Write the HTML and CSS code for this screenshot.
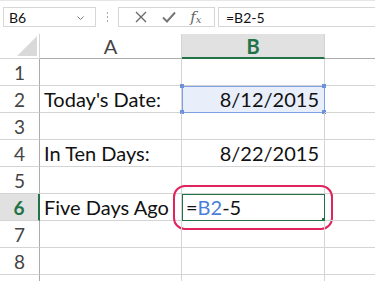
FILE: index.html
```html
<!DOCTYPE html>
<html lang="en">
<head>
    <meta charset="UTF-8">
    <meta name="viewport" content="width=device-width, initial-scale=1.0">
    <title>Date formula</title>
    <link rel="stylesheet" href="styles.css">
</head>
<body>
    <!-- formula bar -->
    <div class="formula-bar">
        <div class="name-box">
            <span>B6</span>
            <svg class="caret" width="7" height="4" viewBox="0 0 7 4"><path d="M0.5 0.5 L3.5 3.5 L6.5 0.5" fill="none" stroke="#777" stroke-width="1"/></svg>
        </div>
        <div class="grip">
            <span></span><span></span><span></span>
        </div>
        <div class="fx-buttons">
            <svg width="14" height="14" viewBox="0 0 14 14"><path d="M2 2 L12 12 M12 2 L2 12" stroke="#666" stroke-width="1.3" fill="none"/></svg>
            <svg width="16" height="14" viewBox="0 0 16 14"><path d="M2 7.5 L6 11.5 L14 2.5" stroke="#777" stroke-width="2" fill="none"/></svg>
            <span class="fx">f<sub>x</sub></span>
        </div>
        <div class="formula-input">=B2-5</div>
    </div>

    <!-- sheet -->
    <div class="sheet">
        <div class="corner"><span class="tri"></span></div>
        <div class="col-head">A</div>
        <div class="col-head active">B</div>
        <div class="col-head last"></div>

        <div class="row-head">1</div>
        <div class="cell"></div>
        <div class="cell"></div>
        <div class="cell last"></div>

        <div class="row-head">2</div>
        <div class="cell text">Today's Date:</div>
        <div class="cell num selected">8/12/2015
            <i class="h tl"></i><i class="h tr"></i><i class="h bl"></i><i class="h br"></i>
        </div>
        <div class="cell last"></div>

        <div class="row-head">3</div>
        <div class="cell"></div>
        <div class="cell"></div>
        <div class="cell last"></div>

        <div class="row-head">4</div>
        <div class="cell text">In Ten Days:</div>
        <div class="cell num">8/22/2015</div>
        <div class="cell last"></div>

        <div class="row-head">5</div>
        <div class="cell"></div>
        <div class="cell"></div>
        <div class="cell last"></div>

        <div class="row-head active">6</div>
        <div class="cell text">Five Days Ago</div>
        <div class="cell text editing">=<span class="ref">B2</span>-5
            <span class="fill-handle"></span>
            <span class="callout"></span>
        </div>
        <div class="cell last"></div>

        <div class="row-head">7</div>
        <div class="cell"></div>
        <div class="cell"></div>
        <div class="cell last"></div>

        <div class="row-head">8</div>
        <div class="cell"></div>
        <div class="cell"></div>
        <div class="cell last"></div>

        <div class="row-head"></div>
        <div class="cell"></div>
        <div class="cell"></div>
        <div class="cell last"></div>
    </div>
</body>
</html>
```

FILE: styles.css
```css
body {
    margin: 0;
    padding: 0;
    background: #ffffff;
    font-family: Lato, "Open Sans", sans-serif;
    color: #111;
    overflow: hidden;
}

/* formula bar */
.formula-bar {
    display: flex;
    align-items: center;
    height: 22px;
    padding: 5px 0 5px 3px;
    border-top: 1px solid #e6e6e6;
}

.name-box {
    width: 93px;
    height: 20px;
    border: 1px solid #d6d6d6;
    display: flex;
    align-items: center;
    justify-content: space-between;
    padding: 0 11px 0 5px;
    box-sizing: border-box;
    font-size: 14px;
}

.caret {
    margin-top: 1px;
}

.grip {
    width: 22px;
    display: flex;
    flex-direction: column;
    align-items: center;
    gap: 2px;
}

.grip span {
    width: 1px;
    height: 2px;
    background: #aaa;
}

.fx-buttons {
    width: 97px;
    height: 20px;
    border: 1px solid #d6d6d6;
    box-sizing: border-box;
    display: flex;
    align-items: center;
    justify-content: space-around;
    padding: 0 6px 0 8px;
}

.fx {
    font-family: "DejaVu Serif", "Liberation Serif", serif;
    font-style: italic;
    font-size: 15px;
    color: #666;
    line-height: 1;
}

.fx sub {
    font-size: 10px;
    vertical-align: -1px;
}

.formula-input {
    flex: 1;
    height: 20px;
    margin-left: 3px;
    border: 1px solid #d6d6d6;
    border-right: none;
    box-sizing: border-box;
    font-size: 14px;
    padding: 1px 0 0 7px;
    line-height: 17px;
}

/* grid */
.sheet {
    display: grid;
    grid-template-columns: 40px 142px 143px 1fr;
    grid-template-rows: 25px repeat(8, 27px) 7px;
    margin-top: 1px;
}

.corner {
    position: relative;
    border-right: 1px solid #d4d4d4;
    border-bottom: 1px solid #d4d4d4;
}

.tri {
    position: absolute;
    right: 2px;
    bottom: 2px;
    width: 0;
    height: 0;
    border-left: 20px solid transparent;
    border-bottom: 20px solid #d9d9d9;
}

.col-head {
    border-right: 1px solid #d4d4d4;
    border-bottom: 1px solid #ababab;
    display: flex;
    align-items: center;
    justify-content: center;
    font-size: 20px;
    color: #444;
}

.col-head.active {
    background: #e1e1e1;
    color: #217346;
    font-weight: bold;
    border-bottom: 2px solid #217346;
}

.col-head.last,
.cell.last {
    border-right: none;
}

.row-head {
    border-right: 1px solid #ababab;
    border-bottom: 1px solid #d4d4d4;
    display: flex;
    align-items: center;
    justify-content: center;
    font-size: 19px;
    color: #444;
}

.row-head.active {
    background: #e1e1e1;
    color: #217346;
    font-weight: bold;
    border-right: 2px solid #217346;
}

.cell {
    position: relative;
    border-right: 1px solid #d4d4d4;
    border-bottom: 1px solid #d4d4d4;
    font-size: 20px;
    line-height: 26px;
    white-space: nowrap;
}

.cell.text {
    padding-left: 4px;
}

.cell.num {
    text-align: right;
    padding-right: 5px;
}

.cell.selected {
    background: #e8eefa;
    outline: 1px solid #7fa0e0;
    outline-offset: -1px;
}

.h {
    position: absolute;
    width: 4px;
    height: 4px;
    background: #6f93da;
}

.h.tl { left: -2px; top: -2px; }
.h.tr { right: -2px; top: -2px; }
.h.bl { left: -2px; bottom: -2px; }
.h.br { right: -2px; bottom: -2px; }

.cell.editing {
    outline: 1px solid #217346;
    outline-offset: -1px;
}

.ref {
    color: #4a7fd8;
}

.fill-handle {
    position: absolute;
    right: -1px;
    bottom: -1px;
    width: 3px;
    height: 3px;
    background: #217346;
}

.callout {
    position: absolute;
    left: -9px;
    top: -9px;
    right: -9px;
    bottom: -10px;
    border: 2px solid #e0245e;
    border-radius: 12px;
}
```
